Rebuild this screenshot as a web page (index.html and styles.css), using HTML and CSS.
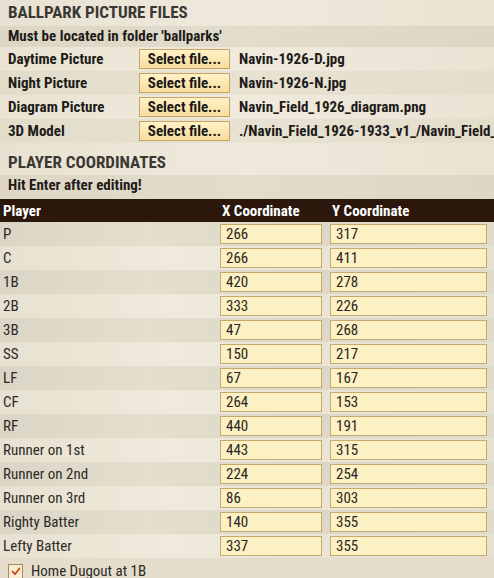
FILE: index.html
```html
<!DOCTYPE html>
<html>
<head>
<meta charset="utf-8">
<link rel="stylesheet" href="styles.css">
</head>
<body>
<div class="panel">
  <h2 class="section-title">BALLPARK PICTURE FILES</h2>
  <div class="note">Must be located in folder 'ballparks'</div>
  <div class="file-row light"><span class="file-label">Daytime Picture</span><button class="btn">Select file...</button><span class="file-name">Navin-1926-D.jpg</span></div>
  <div class="file-row dark"><span class="file-label">Night Picture</span><button class="btn">Select file...</button><span class="file-name">Navin-1926-N.jpg</span></div>
  <div class="file-row light"><span class="file-label">Diagram Picture</span><button class="btn">Select file...</button><span class="file-name">Navin_Field_1926_diagram.png</span></div>
  <div class="file-row dark"><span class="file-label">3D Model</span><button class="btn">Select file...</button><span class="file-name">./Navin_Field_1926-1933_v1_/Navin_Field_1926-1933_v1.glb</span></div>
  <h2 class="section-title second">PLAYER COORDINATES</h2>
  <div class="note second">Hit Enter after editing!</div>
  <div class="coords">
    <div class="row head"><span class="cell">Player</span><span class="cell">X Coordinate</span><span class="cell">Y Coordinate</span></div>
    <div class="row"><span class="cell">P</span><span class="cell"><span class="inp">266</span></span><span class="cell"><span class="inp">317</span></span></div>
    <div class="row"><span class="cell">C</span><span class="cell"><span class="inp">266</span></span><span class="cell"><span class="inp">411</span></span></div>
    <div class="row"><span class="cell">1B</span><span class="cell"><span class="inp">420</span></span><span class="cell"><span class="inp">278</span></span></div>
    <div class="row"><span class="cell">2B</span><span class="cell"><span class="inp">333</span></span><span class="cell"><span class="inp">226</span></span></div>
    <div class="row"><span class="cell">3B</span><span class="cell"><span class="inp">47</span></span><span class="cell"><span class="inp">268</span></span></div>
    <div class="row"><span class="cell">SS</span><span class="cell"><span class="inp">150</span></span><span class="cell"><span class="inp">217</span></span></div>
    <div class="row"><span class="cell">LF</span><span class="cell"><span class="inp">67</span></span><span class="cell"><span class="inp">167</span></span></div>
    <div class="row"><span class="cell">CF</span><span class="cell"><span class="inp">264</span></span><span class="cell"><span class="inp">153</span></span></div>
    <div class="row"><span class="cell">RF</span><span class="cell"><span class="inp">440</span></span><span class="cell"><span class="inp">191</span></span></div>
    <div class="row"><span class="cell">Runner on 1st</span><span class="cell"><span class="inp">443</span></span><span class="cell"><span class="inp">315</span></span></div>
    <div class="row"><span class="cell">Runner on 2nd</span><span class="cell"><span class="inp">224</span></span><span class="cell"><span class="inp">254</span></span></div>
    <div class="row"><span class="cell">Runner on 3rd</span><span class="cell"><span class="inp">86</span></span><span class="cell"><span class="inp">303</span></span></div>
    <div class="row"><span class="cell">Righty Batter</span><span class="cell"><span class="inp">140</span></span><span class="cell"><span class="inp">355</span></span></div>
    <div class="row"><span class="cell">Lefty Batter</span><span class="cell"><span class="inp">337</span></span><span class="cell"><span class="inp">355</span></span></div>
  </div>
  <div class="check-row">
    <span class="checkbox"><svg width="12" height="11" viewBox="0 0 12 11"><path d="M2.5 5.5 L5 8.2 L9.5 2.5" fill="none" stroke="#d2441a" stroke-width="1.8" stroke-linecap="round" stroke-linejoin="round"/></svg></span>
    <span class="check-label">Home Dugout at 1B</span>
  </div>
</div>
</body>
</html>
```

FILE: styles.css
```css
html, body {
  margin: 0;
  padding: 0;
}
body {
  width: 494px;
  height: 578px;
  overflow: hidden;
  background: #e6dfce;
  font-family: "Roboto Condensed", "Liberation Sans Narrow", "DejaVu Sans Condensed", Roboto, sans-serif;
  color: #2e2a26;
}
.panel {
  width: 494px;
  background: linear-gradient(90deg, #e4ddcc 0%, #ebe5d5 40%, #e7e0cf 100%);
}
.section-title {
  margin: 0;
  height: 26px;
  padding-left: 8px;
  font-size: 17px;
  font-weight: 700;
  line-height: 25px;
  color: #3b3834;
  background: linear-gradient(90deg, #e8e2d2, #eee9db 50%, #e9e3d3);
}
.section-title.second {
  height: 32px;
  box-sizing: border-box;
  padding-top: 8px;
  line-height: 22px;
}
.note {
  height: 21px;
  line-height: 21px;
  padding-left: 8px;
  font-size: 15px;
  font-weight: 700;
  color: #1e1b18;
  background: linear-gradient(90deg, #ddd6c5, #e2dccc 50%, #ddd6c6);
}
.note.second {
  height: 24px;
  line-height: 21px;
}
.file-row {
  display: flex;
  align-items: center;
  height: 24px;
  white-space: nowrap;
  overflow: hidden;
}
.file-row.light { background: linear-gradient(90deg, #e9e3d3, #efeadc 50%, #e9e3d4); }
.file-row.dark { background: linear-gradient(90deg, #e2dccb, #e8e2d2 50%, #e3ddcc); }
.file-label {
  flex: 0 0 131px;
  padding-left: 8px;
  font-size: 15px;
  font-weight: 700;
  color: #1e1b18;
}
.btn {
  flex: 0 0 91px;
  height: 20px;
  padding: 0;
  margin: 0;
  border: 1px solid #c9a466;
  background: linear-gradient(#fff1c8, #f8dd9c);
  font-family: inherit;
  font-size: 15px;
  font-weight: 700;
  color: #1b1815;
  line-height: 18px;
}
.file-name {
  flex: 0 0 auto;
  padding-left: 9px;
  font-size: 15px;
  font-weight: 700;
  color: #1e1b18;
}
.coords {
  width: 494px;
}
.row {
  display: grid;
  grid-template-columns: 216px 110px 1fr;
  height: 24px;
  align-items: center;
  font-size: 15px;
  color: #2e2a26;
}
.row .cell:first-child { padding-left: 3px; }
.row .cell:nth-child(2) { padding: 0 4px; }
.row .cell:nth-child(3) { padding: 0 7px 0 4px; }
.row.head {
  height: 23px;
  background: #2b170c;
  color: #ffffff;
  font-weight: 700;
}
.row.head .cell:nth-child(2),
.row.head .cell:nth-child(3) { padding-left: 6px; }
.row:nth-child(even) { background: linear-gradient(90deg, #dbd5c6, #e4dece 30%, #ddd7c7 60%, #e1dbcb); }
.row:nth-child(odd):not(.head) { background: linear-gradient(90deg, #e7e1d1, #efeadb 35%, #e9e3d3 70%, #e6e0d0); }
.inp {
  display: block;
  height: 18px;
  line-height: 18px;
  border: 1px solid #c6a96f;
  background: #fdf0c2;
  padding-left: 5px;
  color: #2a2622;
}
.check-row {
  display: flex;
  align-items: center;
  height: 26px;
  padding-left: 8px;
  background: #e4ddcc;
}
.checkbox {
  width: 13px;
  height: 13px;
  border: 1px solid #a58a63;
  background: #f6ecd0;
  display: flex;
  align-items: center;
  justify-content: center;
}
.check-label {
  padding-left: 8px;
  font-size: 15px;
  color: #2e2a26;
}
```
